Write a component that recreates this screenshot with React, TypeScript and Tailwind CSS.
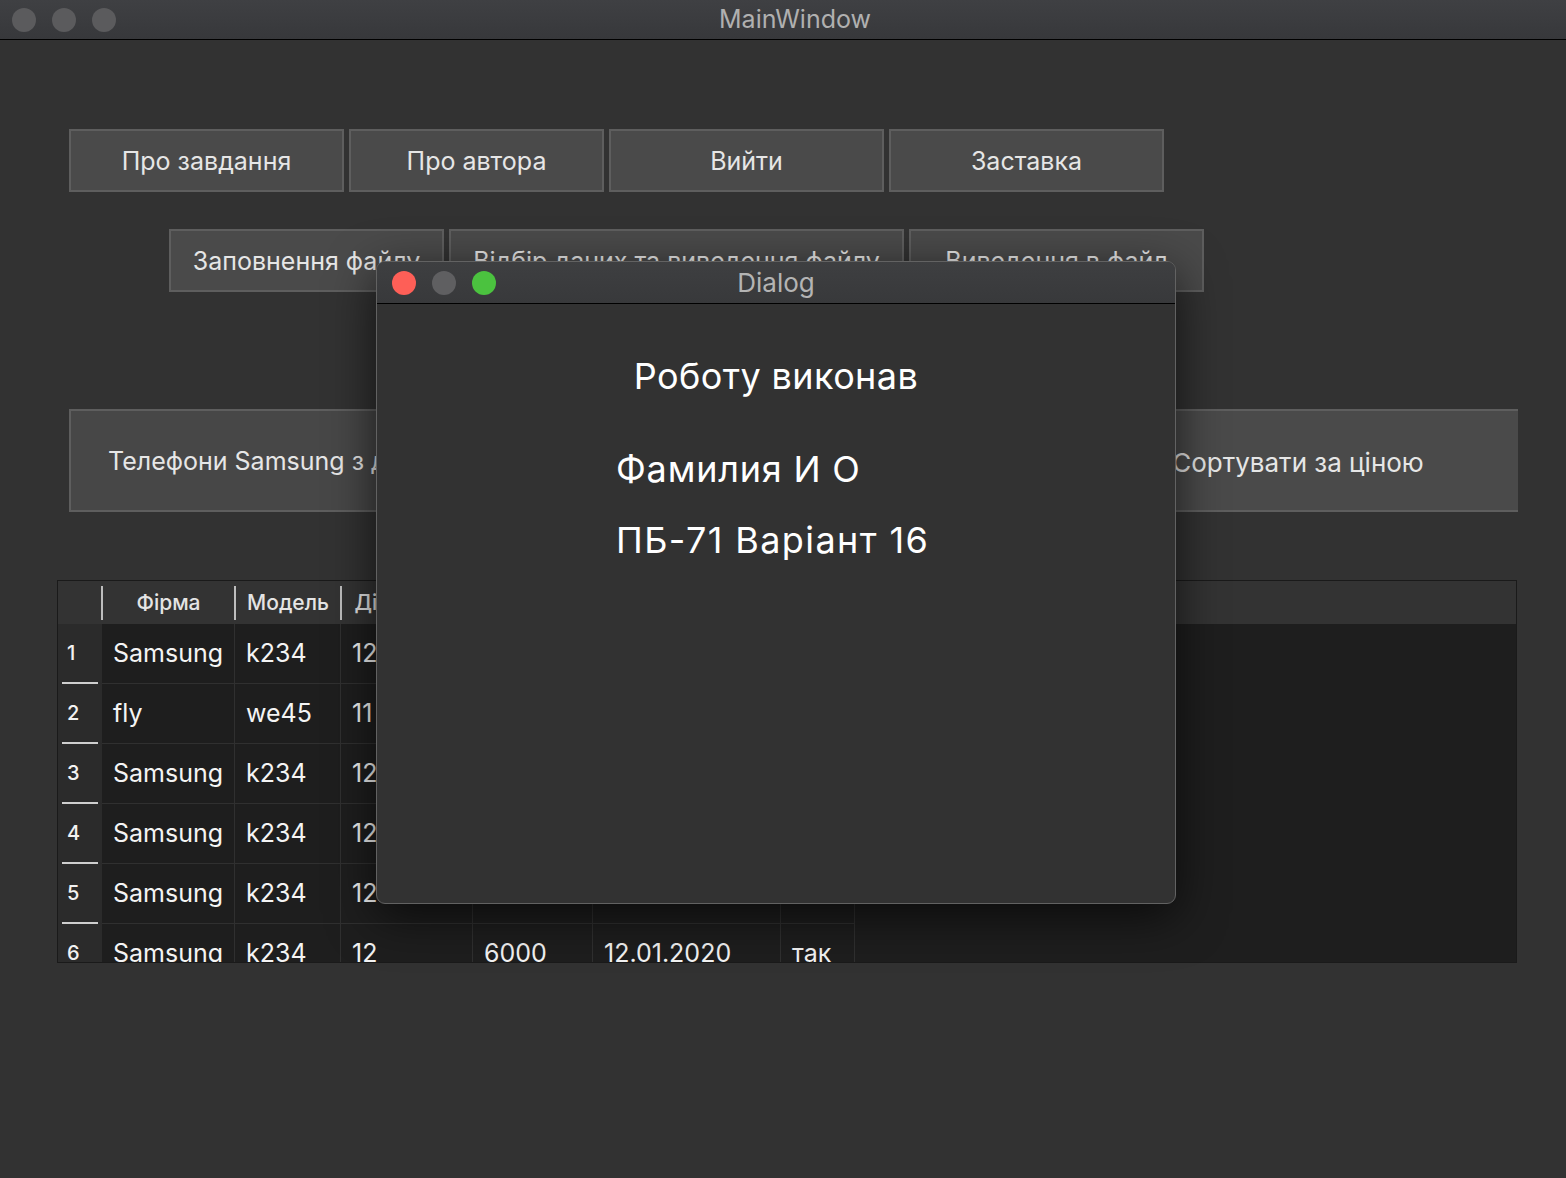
import React from "react";

const FONT = "font-['Inter','Noto_Sans',sans-serif]";

const rows = [
  ["Samsung", "k234", "12", "6000", "12.01.2020", "так"],
  ["fly", "we45", "11", "4500", "11.03.2019", "ні"],
  ["Samsung", "k234", "12", "6000", "12.01.2020", "так"],
  ["Samsung", "k234", "12", "6000", "12.01.2020", "так"],
  ["Samsung", "k234", "12", "6000", "12.01.2020", "так"],
  ["Samsung", "k234", "12", "6000", "12.01.2020", "так"],
];

const cols = [
  { title: "Фірма", w: "w-[133px]" },
  { title: "Модель", w: "w-[106px]" },
  { title: "Діагональ", w: "w-[132px]" },
  { title: "Ціна", w: "w-[120px]" },
  { title: "Дата", w: "w-[188px]" },
  { title: "Є", w: "w-[74px]" },
];

function Lights({ color }: { color: boolean }) {
  return (
    <div className="flex items-center gap-4">
      <span className={`block h-6 w-6 rounded-full ${color ? "bg-[#fe5f57]" : "bg-[#5b5b5d]"}`} />
      <span className={`block h-6 w-6 rounded-full ${color ? "bg-[#5f5f61]" : "bg-[#5b5b5d]"}`} />
      <span className={`block h-6 w-6 rounded-full ${color ? "bg-[#4bc23f]" : "bg-[#5b5b5d]"}`} />
    </div>
  );
}

function Btn({ label, w, h = "h-[63px]", extra = "" }: { label: string; w: string; h?: string; extra?: string }) {
  return (
    <button
      className={`${w} ${h} flex shrink-0 items-center justify-center overflow-hidden whitespace-nowrap border-2 border-[#5e5e5e] bg-[#4a4a4a] pt-[3px] text-[25px] text-[#e6e6e6] ${extra}`}
    >
      {label}
    </button>
  );
}

function Table() {
  return (
    <div className="ml-[57px] mt-[68px] h-[383px] w-[1460px] overflow-hidden border border-[#1a1a1a] bg-[#1e1e1e]">
      {/* header */}
      <div className="flex h-[43px] bg-[#333333]">
        <div className="w-[43px] shrink-0" />
        {cols.map((c) => (
          <div key={c.title} className={`${c.w} flex shrink-0 items-center`}>
            <div className="flex h-[34px] w-full items-center justify-center border-l-2 border-[#bdbdbd] text-[21px] font-medium text-[#e4e4e4]">
              {c.title}
            </div>
          </div>
        ))}
      </div>
      {/* body */}
      {rows.map((r, i) => (
        <div key={i} className="flex h-[60px]">
          <div className="flex w-[44px] shrink-0 flex-col bg-[#2b2b2b] px-[4px]">
            <div className="flex flex-1 items-center pl-[5px] text-[20px] font-medium text-[#f2f2f2]">{i + 1}</div>
            <div className="h-[2px] w-[36px] bg-[#cfcfcf]" />
          </div>
          {r.map((v, j) => (
            <div
              key={j}
              className={`${cols[j].w} flex shrink-0 items-center border-b border-r border-[#303030] pl-[11px] text-[25px] text-[#f4f4f4]`}
            >
              {v}
            </div>
          ))}
        </div>
      ))}
    </div>
  );
}

function Dialog() {
  return (
    <div className="absolute left-[376px] top-[261px] h-[643px] w-[800px] overflow-hidden rounded-[9px] border border-[#626262] bg-[#323232] shadow-[0_12px_48px_rgba(0,0,0,0.65)]">
      <div className="relative flex h-[42px] items-center border-b border-black bg-gradient-to-b from-[#3e3f41] to-[#38393b] pl-[15px]">
        <Lights color />
        <div className="absolute inset-0 flex items-center justify-center text-[26px] text-[#b4b4b4]">Dialog</div>
      </div>
      <div className="flex flex-col">
        <div className="mt-[54px] text-center text-[36px] leading-none tracking-[0.4px] text-white">Роботу виконав</div>
        <div className="ml-[239px] mt-[57px] text-[36px] leading-none tracking-[0.8px] text-white">Фамилия И О</div>
        <div className="ml-[239px] mt-[35px] text-[36px] leading-none tracking-[1.4px] text-white">ПБ-71 Варіант 16</div>
      </div>
    </div>
  );
}

export default function App() {
  return (
    <div className={`relative h-[1178px] w-[1566px] overflow-hidden bg-[#323232] ${FONT}`}>
      <div className="relative flex h-[40px] items-center border-b border-black bg-gradient-to-b from-[#3f4043] to-[#37383b] pl-[12px]">
        <Lights color={false} />
        <div className="absolute inset-0 flex items-center justify-center pl-[24px] text-[25px] text-[#b0b0b0]">MainWindow</div>
      </div>

      <div className="ml-[69px] mt-[89px] flex gap-[5px]">
        <Btn label="Про завдання" w="w-[275px]" />
        <Btn label="Про автора" w="w-[255px]" />
        <Btn label="Вийти" w="w-[275px]" />
        <Btn label="Заставка" w="w-[275px]" />
      </div>

      <div className="ml-[169px] mt-[37px] flex gap-[5px]">
        <Btn label="Заповнення файлу" w="w-[275px]" />
        <Btn label="Відбір даних та виведення файлу" w="w-[455px]" />
        <Btn label="Виведення в файл" w="w-[295px]" />
      </div>

      <div className="ml-[69px] mt-[117px] flex gap-[5px]">
        <Btn label="Телефони Samsung з діагоналлю 12" w="w-[491px]" h="h-[103px]" extra="justify-start pl-[37px] bg-[#474747]" />
        <Btn label="Пошук" w="w-[506px]" h="h-[103px]" extra="bg-[#474747]" />
        <Btn label="Сортувати за ціною" w="w-[442px]" h="h-[103px]" extra="border-r-0 bg-[#4a4a4a] text-[26px]" />
      </div>

      <Table />

      <Dialog />
    </div>
  );
}
